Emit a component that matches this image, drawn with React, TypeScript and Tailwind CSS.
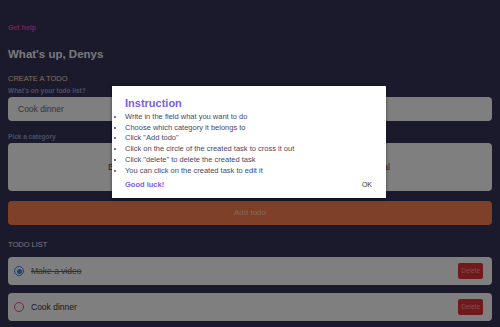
import { useState } from "react"

const todos = [
  { id: 1, text: "Make a video", done: true, category: "business" },
  { id: 2, text: "Cook dinner", done: false, category: "personal" },
]

const passos = [
  "Write in the field what you want to do",
  "Choose which category it belongs to",
  'Click "Add todo"',
  "Click on the circle of the created task to cross it out",
  'Click "delete" to delete the created task',
  "You can click on the created task to edit it",
]

const App = () => {
  const [ texto, setTexto ] = useState<string>("Cook dinner")
  const [ modal, setModal ] = useState<boolean>(true)

  return (
    <main className="relative w-full h-[327px] overflow-hidden bg-[#36345a] font-['Liberation_Sans',Arial,sans-serif]">
      <div className="flex flex-col px-2 pt-[24px]">
        <a className="text-[7px] font-bold text-[#f03ca8] leading-[8px]">Get help</a>
        <h1 className="mt-[14px] text-[11.5px] font-bold text-[#f2f2f5] leading-[16px]">What's up, Denys</h1>

        <h2 className="mt-[12px] text-[7.5px] uppercase text-[#f6dcb6] leading-[10px]">Create a todo</h2>
        <label className="mt-[2px] text-[6.5px] font-bold text-[#9c9abf] leading-[9px]">What's on your todo list?</label>
        <div className="mt-[2px] h-[24px] rounded-[4px] bg-white flex items-center px-[10px]">
          <input value={texto} onChange={(e) => setTexto(e.target.value)} className="w-full outline-none text-[8.5px] text-[#6a6a6a]" />
        </div>

        <label className="mt-[11px] text-[6.5px] font-bold text-[#9c9abf] leading-[9px]">Pick a category</label>
        <div className="mt-[2px] h-[48px] rounded-[4px] bg-white flex items-center justify-between pl-[100px] pr-[102px] text-[8.5px] text-[#444]">
          <span>Business</span>
          <span>Personal</span>
        </div>

        <button className="mt-[10px] h-[24px] rounded-[4px] bg-[#ff8154] text-[8px] text-[#ffcfbb]">Add todo</button>

        <h2 className="mt-[15px] text-[7.5px] uppercase text-[#e8e8f0] leading-[10px]">Todo list</h2>
        <div className="mt-[7px] flex flex-col gap-[8px]">
          {todos.map((t) => (
            <div key={t.id} className="h-[28px] rounded-[4px] bg-white flex items-center pl-[6px] pr-[9px]">
              <span className={`w-[10px] h-[10px] rounded-full border-[1.5px] flex items-center justify-center ${t.done ? "border-[#3b82f6]" : "border-[#ec4899]"}`}>
                {t.done && <span className="w-[5px] h-[5px] rounded-full bg-[#3b82f6]" />}
              </span>
              <span className={`ml-[7px] text-[8.5px] flex-1 ${t.done ? "line-through text-[#666]" : "text-[#333]"}`}>{t.text}</span>
              <button className="h-[16px] px-[3px] rounded-[2px] bg-[#e0353c] text-[6.5px] text-[#ff9a9a]">Delete</button>
            </div>
          ))}
        </div>
      </div>

      {modal && (
        <div className="absolute inset-0 bg-black/50">
          <div className="absolute left-[112px] top-[86px] w-[274px] h-[112px] bg-white shadow-[0_1px_3px_rgba(0,0,0,0.5)] pl-[13px] pr-[14px] pt-[9px]">
            <h3 className="text-[11px] font-bold text-[#7b5cf5] leading-[16px]">Instruction</h3>
            <ul className="mt-[1px] list-disc pl-0 text-[7.5px] text-[#4a4866] leading-[10.7px]">
              {passos.map((p) => (
                <li key={p}>{p}</li>
              ))}
            </ul>
            <div className="mt-[3px] flex items-center justify-between">
              <span className="text-[7.5px] font-bold text-[#7b5cf5]">Good luck!</span>
              <button onClick={() => setModal(false)} className="text-[7px] text-[#333]">OK</button>
            </div>
          </div>
        </div>
      )}
    </main>
  )
}

export default App
